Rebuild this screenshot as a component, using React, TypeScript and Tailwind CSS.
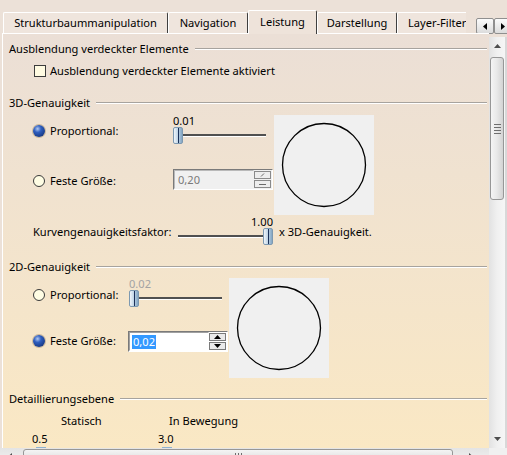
import React from "react";

function Radio({ checked }: { checked: boolean }) {
  if (checked) {
    return (
      <span className="block w-[12px] h-[12px] shrink-0 rounded-full bg-[radial-gradient(circle_at_38%_32%,#b3c9f0_0%,#2f5fc0_32%,#0c2563_100%)] shadow-[0_0_0_1px_#cbb89a]" />
    );
  }
  return <span className="block w-[12px] h-[12px] shrink-0 rounded-full border border-[#3a3a3a] bg-[#fffde4]" />;
}

function Thumb() {
  return (
    <span className="flex justify-center w-[10px] h-[17px] shrink-0 rounded-[2px] border border-[#7d99b1] bg-gradient-to-r from-[#f0f5fa] via-[#bdd3e5] to-[#84a6c3]">
      <span className="block w-[1px] h-full bg-[#1b3058]" />
    </span>
  );
}

function Track() {
  return <span className="block flex-1 h-[3px] border-t-2 border-t-[#505050] border-b border-b-white" />;
}

function Header({ title }: { title: string }) {
  return (
    <div className="flex items-center h-[16px] pl-[6px] pr-[2px]">
      <span className="whitespace-nowrap">{title}</span>
      <span className="block flex-1 ml-[6px] h-[2px] border-t border-t-[#a7a39e] border-b border-b-white" />
    </div>
  );
}

function UpArrow({ color }: { color: string }) {
  return (
    <svg width="7" height="4" viewBox="0 0 7 4">
      <polygon points="0,4 7,4 3.5,0" fill={color} />
    </svg>
  );
}
function DownArrow({ color }: { color: string }) {
  return (
    <svg width="7" height="4" viewBox="0 0 7 4">
      <polygon points="0,0 7,0 3.5,4" fill={color} />
    </svg>
  );
}

function SpinDisabled({ value }: { value: string }) {
  return (
    <div className="flex w-[100px] h-[21px] border border-t-[#7a7a7a] border-l-[#7a7a7a] border-r-white border-b-white bg-[#f0f0f0]">
      <div className="flex-1 flex items-center pl-[3px] text-[#7a7a7a] border border-t-[#b9b9b9] border-l-[#b9b9b9] border-r-transparent border-b-transparent">
        {value}
      </div>
      <div className="flex flex-col w-[18px] py-[1px] pr-[1px] gap-[1px]">
        <div className="flex-1 border border-[#8a8a8a] bg-[#ededed] flex items-center justify-center">
          <svg width="6" height="4" viewBox="0 0 6 4">
            <line x1="1" y1="3.5" x2="4" y2="0.5" stroke="#6a6a6a" strokeWidth="1" />
          </svg>
        </div>
        <div className="flex-1 border border-[#8a8a8a] bg-[#ededed] flex items-center justify-center">
          <span className="block w-[7px] h-[1px] bg-[#6a6a6a]" />
        </div>
      </div>
    </div>
  );
}

function SpinEnabled({ value }: { value: string }) {
  return (
    <div className="flex w-[100px] h-[21px] border border-t-[#7a7a7a] border-l-[#7a7a7a] border-r-white border-b-white bg-white">
      <div className="flex-1 flex items-center pl-[2px] border border-t-[#a0a0a0] border-l-[#a0a0a0] border-r-transparent border-b-transparent">
        <span className="bg-[#3399ff] text-white px-[1px] leading-[14px]">{value}</span>
      </div>
      <div className="flex flex-col w-[18px] py-[1px] pr-[1px] gap-[1px]">
        <div className="flex-1 border border-[#7a7a7a] bg-[#eaeaea] flex items-center justify-center">
          <UpArrow color="#000" />
        </div>
        <div className="flex-1 border border-[#7a7a7a] bg-[#eaeaea] flex items-center justify-center">
          <DownArrow color="#000" />
        </div>
      </div>
    </div>
  );
}

function CircleBox() {
  return (
    <div className="w-[100px] h-[100px] shrink-0 bg-[#f0f0f0]">
      <svg width="100" height="100" viewBox="0 0 100 100">
        <circle cx="50" cy="50" r="41.5" fill="none" stroke="#000" strokeWidth="1.3" />
      </svg>
    </div>
  );
}

function Tab({ label, w, active }: { label: string; w: string; active?: boolean }) {
  if (active) {
    return (
      <div className={`${w} relative z-10 -mb-[1px] h-[24px] flex items-center justify-center rounded-t-[2px] border-l border-t border-white border-r border-r-[#3f3f3f] bg-[#eee3da] shrink-0`}>
        <span className="whitespace-nowrap pb-[1px]">{label}</span>
      </div>
    );
  }
  return (
    <div className={`${w} h-[21px] flex items-center justify-center rounded-t-[2px] border-l border-t border-white border-r border-r-[#3f3f3f] bg-[#efe5dd] shrink-0 overflow-hidden`}>
      <span className="whitespace-nowrap">{label}</span>
    </div>
  );
}

export default function App() {
  return (
    <div className="w-[507px] h-[455px] overflow-hidden flex flex-col bg-[#ece1d8] text-black text-[11.1px] leading-[16px] font-['Noto_Sans','DejaVu_Sans',sans-serif]">
      {/* tab strip */}
      <div className="h-[33px] flex items-end pl-[3px] shrink-0">
        <Tab label="Strukturbaummanipulation" w="w-[165px]" />
        <Tab label="Navigation" w="w-[80px]" />
        <Tab label="Leistung" w="w-[69px]" active />
        <Tab label="Darstellung" w="w-[80px]" />
        <div className="w-[69px] h-[21px] flex items-center pl-[10px] rounded-tl-[2px] border-l border-t border-white bg-[#efe5dd] shrink-0 overflow-hidden">
          <span className="whitespace-nowrap">Layer-Filter</span>
        </div>
        <div className="flex self-start mt-[18px] ml-[10px]">
          <div className="w-[18px] h-[16px] flex items-center justify-center border border-[#8f8f8f] rounded-[2px] bg-gradient-to-b from-[#fbfbfb] to-[#dcdcdc]">
            <svg width="4" height="7" viewBox="0 0 4 7">
              <polygon points="4,0 4,7 0,3.5" fill="#000" />
            </svg>
          </div>
          <div className="w-[18px] h-[16px] flex items-center justify-center border border-[#8f8f8f] rounded-[2px] bg-gradient-to-b from-[#fbfbfb] to-[#dcdcdc]">
            <svg width="4" height="7" viewBox="0 0 4 7">
              <polygon points="0,0 0,7 4,3.5" fill="#000" />
            </svg>
          </div>
        </div>
      </div>

      {/* middle */}
      <div className="h-[415px] flex shrink-0">
        <div className="w-[487px] ml-[2px] border-l border-t border-white bg-gradient-to-b from-[#ebdfd6] to-[#fae8c4] overflow-hidden">
          <div className="mt-[7px]">
            <Header title="Ausblendung verdeckter Elemente" />
          </div>
          <div className="mt-[6px] h-[16px] flex items-center pl-[31px] gap-[4px]">
            <span className="block w-[12px] h-[12px] border border-[#3c3c3c] bg-[#fffbe2]" />
            <span className="whitespace-nowrap">Ausblendung verdeckter Elemente aktiviert</span>
          </div>

          <div className="mt-[16px]">
            <Header title="3D-Genauigkeit" />
          </div>
          <div className="mt-[4px] flex">
            <div className="w-[170px] pl-[30px] pt-[8px] flex flex-col">
              <div className="h-[16px] flex items-center gap-[5px]">
                <Radio checked />
                <span>Proportional:</span>
              </div>
              <div className="mt-[34px] h-[16px] flex items-center gap-[5px]">
                <Radio checked={false} />
                <span>Feste Größe:</span>
              </div>
            </div>
            <div className="w-[101px] flex flex-col">
              <div className="h-[12px] leading-[12px]">0.01</div>
              <div className="w-[93px] flex items-center">
                <Thumb />
                <Track />
              </div>
              <div className="mt-[25px]">
                <SpinDisabled value="0,20" />
              </div>
            </div>
            <CircleBox />
          </div>

          <div className="mt-[1px] flex items-start">
            <div className="w-[175px] pl-[30px] mt-[8px] whitespace-nowrap">Kurvengenauigkeitsfaktor:</div>
            <div className="w-[95px] flex flex-col">
              <div className="h-[12px] leading-[12px] text-right">1.00</div>
              <div className="flex items-center">
                <Track />
                <Thumb />
              </div>
            </div>
            <div className="ml-[6px] mt-[8px] whitespace-nowrap">x 3D-Genauigkeit.</div>
          </div>

          <div className="mt-[14px]">
            <Header title="2D-Genauigkeit" />
          </div>
          <div className="mt-[3px] flex">
            <div className="w-[125px] pl-[30px] pt-[9px] flex flex-col">
              <div className="h-[16px] flex items-center gap-[5px]">
                <Radio checked={false} />
                <span>Proportional:</span>
              </div>
              <div className="mt-[30px] h-[16px] flex items-center gap-[5px]">
                <Radio checked />
                <span>Feste Größe:</span>
              </div>
            </div>
            <div className="w-[101px] flex flex-col">
              <div className="h-[12px] leading-[12px] pl-[1px] text-[#a3a3a3]">0.02</div>
              <div className="w-[93px] ml-[1px] flex items-center">
                <Thumb />
                <Track />
              </div>
              <div className="mt-[24px]">
                <SpinEnabled value="0,02" />
              </div>
            </div>
            <CircleBox />
          </div>

          <div className="mt-[13px]">
            <Header title="Detaillierungsebene" />
          </div>
          <div className="mt-[6px] h-[16px] flex">
            <span className="w-[166px] pl-[58px]">Statisch</span>
            <span>In Bewegung</span>
          </div>
          <div className="mt-[2px] h-[16px] flex">
            <span className="w-[155px] pl-[29px]">0.5</span>
            <span>3.0</span>
          </div>
          <div className="h-[4px] flex">
            <span className="ml-[33px] w-[10px] h-[4px] bg-[#8fb2d0]" />
            <span className="ml-[116px] w-[10px] h-[4px] bg-[#8fb2d0]" />
          </div>
        </div>

        {/* vertical scrollbar */}
        <div className="w-[18px] pt-[4px] flex">
          <div className="w-[16px] flex flex-col bg-gradient-to-r from-[#e2e2e2] via-[#f0f0f0] to-[#f6f6f6]">
            <div className="h-[18px] flex items-center justify-center">
              <UpArrow color="#4d4d4d" />
            </div>
            <div className="mt-[2px] mx-[1px] h-[143px] rounded-[3px] border border-[#979797] bg-gradient-to-r from-[#f5f5f5] via-[#e8e8e8] to-[#d3d3d3] flex flex-col items-center justify-center gap-[2px]">
              <span className="block w-[7px] h-[1px] bg-[#6e6e6e]" />
              <span className="block w-[7px] h-[1px] bg-[#6e6e6e]" />
              <span className="block w-[7px] h-[1px] bg-[#6e6e6e]" />
              <span className="block w-[7px] h-[1px] bg-[#6e6e6e]" />
            </div>
            <div className="flex-1" />
            <div className="h-[18px] flex items-center justify-center">
              <DownArrow color="#4d4d4d" />
            </div>
          </div>
          <div className="w-[2px] bg-[#d8d8d8]" />
        </div>
      </div>

      {/* horizontal scrollbar */}
      <div className="h-[17px] flex shrink-0 bg-gradient-to-b from-[#e4e4e4] to-[#f4f4f4]">
        <div className="w-[20px] flex items-center justify-center">
          <svg width="4" height="7" viewBox="0 0 4 7">
            <polygon points="4,0 4,7 0,3.5" fill="#4d4d4d" />
          </svg>
        </div>
        <div className="ml-[3px] mt-[1px] w-[430px] h-[15px] rounded-[3px] border border-[#979797] bg-gradient-to-b from-[#f5f5f5] to-[#d6d6d6] flex justify-center items-center gap-[2px]">
          <span className="block w-[1px] h-[7px] bg-[#6e6e6e]" />
          <span className="block w-[1px] h-[7px] bg-[#6e6e6e]" />
          <span className="block w-[1px] h-[7px] bg-[#6e6e6e]" />
        </div>
        <div className="w-[36px] flex items-center justify-center">
          <svg width="4" height="7" viewBox="0 0 4 7">
            <polygon points="0,0 0,7 4,3.5" fill="#4d4d4d" />
          </svg>
        </div>
        <div className="flex-1 bg-[#f0f0f0]" />
      </div>
    </div>
  );
}
